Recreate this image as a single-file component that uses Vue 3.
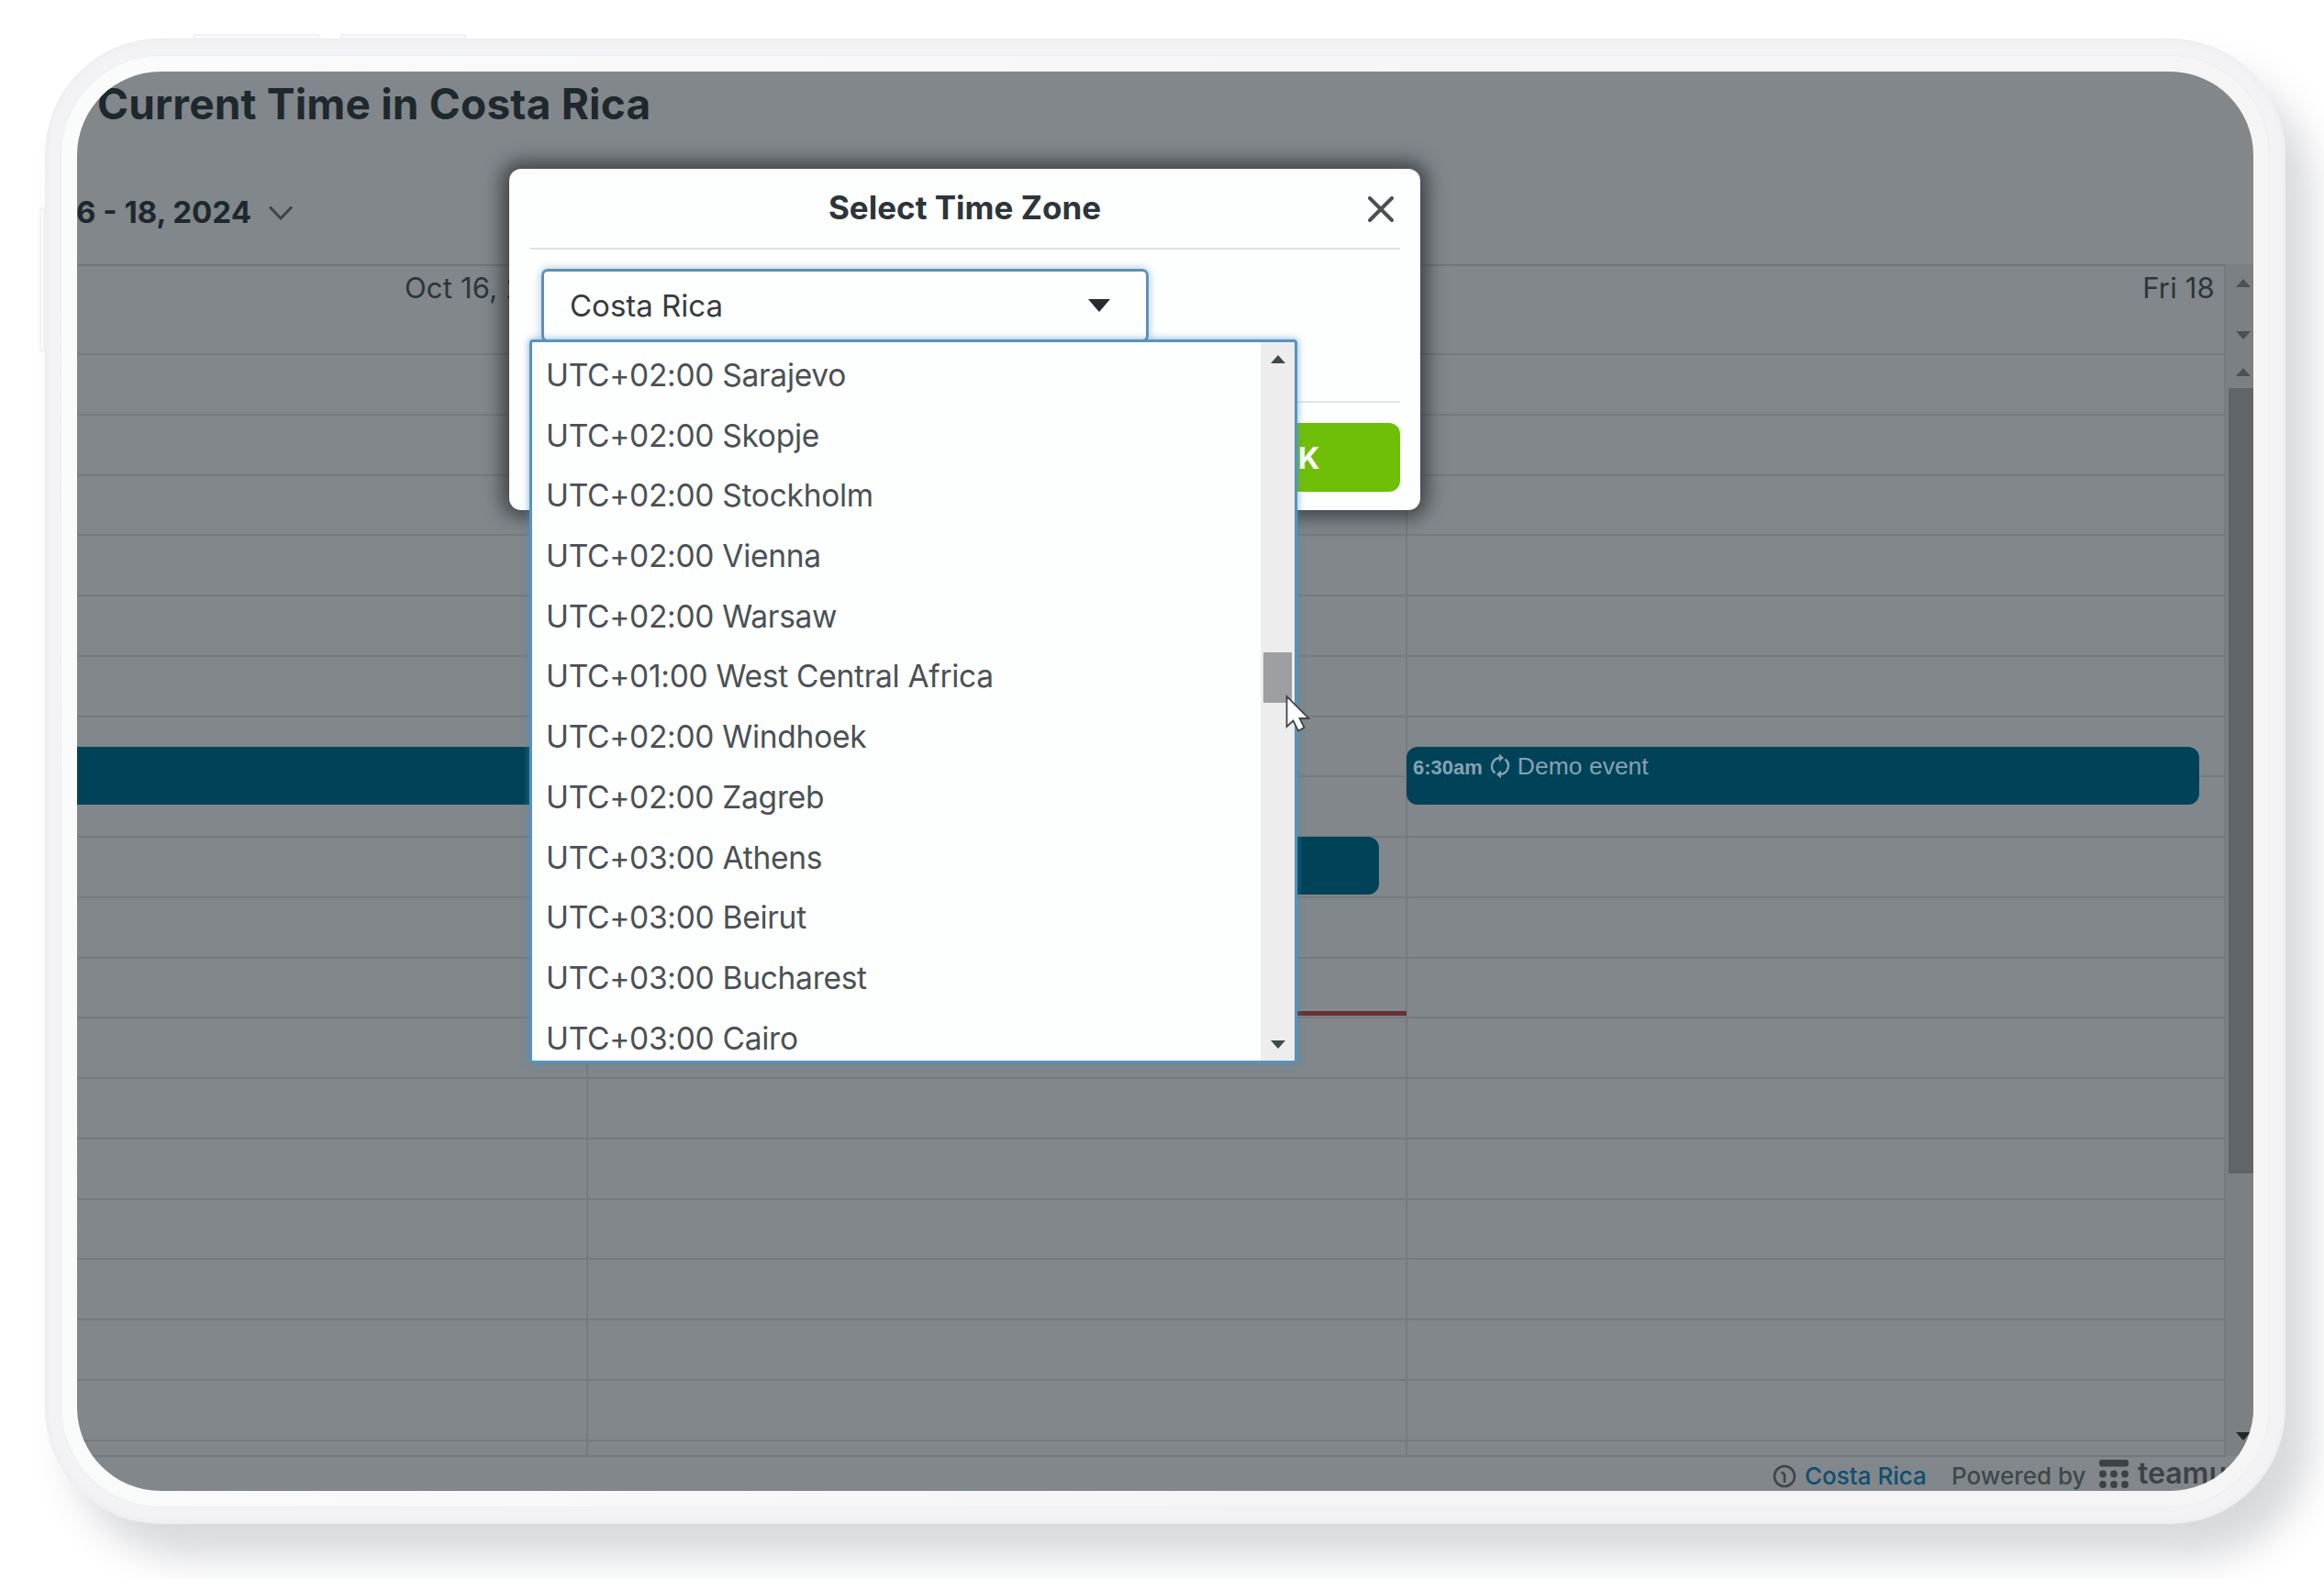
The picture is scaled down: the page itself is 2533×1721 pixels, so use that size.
<template>
  <div class="page">
    <div class="tablet">
      <!-- physical buttons -->
      <span class="tablet__key tablet__key--left"></span>
      <span class="tablet__key tablet__key--top1"></span>
      <span class="tablet__key tablet__key--top2"></span>

      <div class="tablet__bezel">
        <div class="screen">
          <header class="head">
            <h1 class="head__title">Current Time in Costa Rica</h1>
          </header>

          <div class="toolbar">
            <span class="toolbar__range">6 - 18, 2024</span>
            <svg class="toolbar__chevron" viewBox="0 0 28 18">
              <path d="M2 2.5 L14 15 L26 2.5" fill="none" stroke="#3f474b" stroke-width="3.2" />
            </svg>
          </div>

          <!-- calendar -->
          <div class="cal">
            <div class="cal__main">
              <div class="cal__days">
                <div v-for="d in days" :key="d" class="cal__day">{{ d }}</div>
              </div>
              <div class="cal__body">
                <div v-for="n in 18" :key="n" class="cal__row">
                  <div v-for="d in days" :key="d" class="cal__cell"></div>
                </div>
                <div class="cal__row cal__row--last">
                  <div v-for="d in days" :key="d" class="cal__cell"></div>
                </div>

                <div class="event event--wed"></div>
                <div class="event event--thu"></div>
                <div class="event event--fri">
                  <b class="event__time">6:30am</b>
                  <svg class="event__icon" viewBox="0 0 22 26">
                    <g fill="none" stroke="#86a2b3" stroke-width="2.4">
                      <path d="M5.500 20.500 A9.300 9.300 0 0 1 11 4" />
                      <path d="M16.500 5.500 A9.300 9.300 0 0 1 11 22" />
                    </g>
                    <path d="M10 -0.500 L15 4 L10 8.500 Z M12 17.500 L7 22 L12 26.500 Z" fill="#86a2b3" />
                  </svg>
                  <span class="event__name">Demo event</span>
                </div>
                <div class="now"></div>
              </div>
            </div>

            <div class="rail">
              <div class="rail__top">
                <i class="tri tri--up"></i>
                <i class="tri tri--down"></i>
              </div>
              <div class="rail__track">
                <i class="tri tri--up"></i>
                <div class="rail__thumb"></div>
                <i class="tri tri--down tri--dark"></i>
              </div>
            </div>
          </div>

          <footer class="foot">
            <svg class="foot__clock" viewBox="0 0 26 26" fill="none" stroke="#3f464a" stroke-width="2.6">
              <circle cx="13" cy="13" r="11" />
              <path d="M9.500 8.500 L13 11 V20" />
            </svg>
            <span class="foot__zone">Costa Rica</span>
            <span class="foot__by">Powered by</span>
            <svg class="foot__logo" viewBox="0 0 32 31" fill="#3b4347">
              <rect x="0" y="0" width="32" height="7.500" rx="3" />
              <circle v-for="c in dots" :key="c.id" :cx="c.x" :cy="c.y" r="3.900" />
            </svg>
            <span class="foot__brand">teamup</span>
          </footer>

          <!-- time zone dialog -->
          <section class="modal">
            <div class="modal__head">
              <h2 class="modal__title">Select Time Zone</h2>
              <svg class="modal__close" viewBox="0 0 28 28">
                <path d="M2 2 L26 26 M26 2 L2 26" stroke="#4a5054" stroke-width="4" stroke-linecap="round" />
              </svg>
            </div>
            <div class="modal__body">
              <div class="select">
                <span class="select__text">{{ selected }}</span>
                <i class="select__caret"></i>
              </div>
            </div>
            <div class="modal__foot">
              <button type="button" class="modal__ok">OK</button>
            </div>
          </section>

          <div class="drop">
            <ul class="drop__list">
              <li v-for="z in zones" :key="z" class="drop__item">{{ z }}</li>
            </ul>
            <div class="drop__bar">
              <i class="tri tri--up tri--list"></i>
              <div class="drop__thumb"></div>
              <i class="tri tri--down tri--list"></i>
            </div>
          </div>

          <svg class="cursor" viewBox="0 0 28 42">
            <path
              d="M1.500 2 V35 L8.500 28.500 L14 39.500 L20.500 36 L15.500 26 H25.500 Z"
              fill="#fff"
              stroke="#3f474c"
              stroke-width="1.800"
            />
          </svg>
        </div>
      </div>
    </div>
  </div>
</template>

<script setup>
import { ref } from 'vue'

const selected = ref('Costa Rica')

const days = ['Oct 16, 2024', 'Thu 17', 'Fri 18']

const zones = [
  'UTC+02:00 Sarajevo',
  'UTC+02:00 Skopje',
  'UTC+02:00 Stockholm',
  'UTC+02:00 Vienna',
  'UTC+02:00 Warsaw',
  'UTC+01:00 West Central Africa',
  'UTC+02:00 Windhoek',
  'UTC+02:00 Zagreb',
  'UTC+03:00 Athens',
  'UTC+03:00 Beirut',
  'UTC+03:00 Bucharest',
  'UTC+03:00 Cairo',
]

// 3 x 2 dots under the bar of the logo
const dots = Array.from({ length: 6 }, (_, i) => ({
  id: i,
  x: 4 + (i % 3) * 12,
  y: i < 3 ? 15.5 : 27,
}))
</script>

<style>
body {
  background: #fff;
}
</style>

<style scoped>
.page {
  box-sizing: border-box;
  width: 2533px;
  height: 1721px;
  padding: 42px 0 0 49px;
  overflow: hidden;
  background: #fff;
  font-family: Inter, 'Liberation Sans', sans-serif;
  color: #1e282d;
}

/* tablet */
.tablet {
  position: relative;
  box-sizing: border-box;
  width: 2442px;
  height: 1619px;
  padding: 19px 18px;
  border-radius: 126px;
  background: #f3f3f5;
  box-shadow: 28px 36px 42px rgba(70, 74, 88, .21), inset 0 0 8px #e9e9ec;
}
.tablet__bezel {
  box-sizing: border-box;
  height: 1581px;
  padding: 17px 17px 17px;
  border-radius: 108px;
  background: linear-gradient(100deg, #fafcfb, #f5f5f5 60%);
  box-shadow: 0 0 0 1px #ededef;
}
.tablet__key {
  position: absolute;
  box-sizing: border-box;
  background: #fcfcfc;
  border: 2px solid #f1f1f2;
}
.tablet__key--left {
  left: -6px;
  top: 184px;
  width: 6px;
  height: 158px;
  border-radius: 4px 0 0 4px;
}
.tablet__key--top1,
.tablet__key--top2 {
  top: -5px;
  width: 139px;
  height: 6px;
  border-radius: 4px 4px 0 0;
}
.tablet__key--top1 {
  left: 161px;
}
.tablet__key--top2 {
  left: 321px;
}

.screen {
  position: relative;
  display: flex;
  flex-direction: column;
  width: 2372px;
  height: 1547px;
  border-radius: 91px;
  overflow: hidden;
  background: #81878b;
}

/* header */
.head {
  height: 97px;
  padding-left: 22px;
}
.head__title {
  margin: 0;
  font-size: 46px;
  line-height: 71px;
  font-weight: 700;
  letter-spacing: .2px;
  white-space: nowrap;
}
.toolbar {
  display: flex;
  align-items: center;
  height: 113px;
}
.toolbar__range {
  margin-left: -1px;
  margin-top: -2px;
  font-size: 33px;
  font-weight: 700;
  white-space: nowrap;
}
.toolbar__chevron {
  width: 28px;
  height: 18px;
  margin: 1px 0 0 18px;
}

/* calendar */
.cal {
  display: flex;
  height: 1299px;
}
.cal__main {
  width: 2342px;
  flex: none;
}
.cal__days,
.cal__row {
  display: grid;
  grid-template-columns: 557px 893px 892px;
}
.cal__days {
  height: 99px;
  box-sizing: border-box;
  border-top: 2px solid #70777a;
  border-bottom: 2px solid #747b7e;
}
.cal__day {
  padding: 4px 12px 0 0;
  font-size: 31px;
  line-height: 40px;
  letter-spacing: .2px;
  text-align: right;
  color: #2c353a;
}
.cal__day:nth-child(3) {
  border-right: 2px solid #757b7f;
  padding-right: 10px;
}
.cal__body {
  position: relative;
}
.cal__row {
  box-sizing: border-box;
  height: 65.75px;
  border-bottom: 2px solid #747b7e;
}
.cal__cell {
  border-right: 2px solid #757b7f;
}
.cal__row--last {
  height: 17px;
}

.event {
  position: absolute;
  box-sizing: border-box;
  height: 63px;
  border-radius: 12px;
  background: #004358;
}
.event--wed {
  left: -300px;
  top: 427px;
  width: 822px;
}
.event--thu {
  left: 557px;
  top: 525px;
  width: 862px;
}
.event--fri {
  display: flex;
  align-items: flex-start;
  left: 1449px;
  top: 427px;
  width: 864px;
  padding: 5px 7px;
  font-family: 'Liberation Sans', sans-serif;
  color: #86a2b3;
}
.event__time {
  font-size: 22px;
  line-height: 36px;
}
.event__icon {
  width: 22px;
  height: 26px;
  margin: 3px 8px 0;
  overflow: visible;
}
.event__name {
  font-size: 26.5px;
  line-height: 33px;
}
.now {
  position: absolute;
  left: 557px;
  top: 715px;
  width: 892px;
  height: 5px;
  background: #6a2f36;
}

/* page scrollbars */
.rail {
  flex: 1;
  display: flex;
  flex-direction: column;
  overflow: hidden;
  background: #7a8083;
}
.rail__top {
  display: flex;
  flex-direction: column;
  justify-content: space-between;
  height: 82px;
  padding: 16px 0 0 11px;
  box-sizing: border-box;
}
.rail__track {
  flex: 1;
  display: flex;
  flex-direction: column;
  padding: 31px 0 17px 11px;
}
.rail__thumb {
  height: 856px;
  margin: 13px 0 auto -8px;
  background: #5f6568;
}
.tri {
  flex: none;
  width: 0;
  height: 0;
  border-left: 8px solid transparent;
  border-right: 8px solid transparent;
}
.tri--up {
  border-bottom: 9px solid #4b5256;
}
.tri--down {
  border-top: 9px solid #4b5256;
}
.tri--dark {
  border-top-color: #1f282d;
}

/* footer */
.foot {
  flex: 1;
  display: flex;
  align-items: center;
  white-space: nowrap;
  font-size: 26px;
  font-weight: 500;
  padding-left: 1848px;
}
.foot__clock {
  flex: none;
  width: 26px;
  height: 26px;
  margin: 6px 9px 0 0;
}
.foot__zone {
  width: 134px;
  margin: 5px 26px 0 0;
  color: #114f6d;
}
.foot__by {
  width: 148px;
  margin: 5px 13px 0 0;
  color: #3f474b;
}
.foot__logo {
  flex: none;
  width: 32px;
  height: 31px;
}
.foot__brand {
  margin: -1px 0 0 10px;
  font-size: 32px;
  font-weight: 600;
  color: #3b4347;
}

/* dialog */
.modal {
  position: absolute;
  left: 471px;
  top: 106px;
  box-sizing: border-box;
  width: 993px;
  height: 372px;
  padding: 0 22px;
  border-radius: 13px;
  background: #fdfefe;
  box-shadow: 0 0 20px 8px rgba(20, 24, 26, .6);
}
.modal__head {
  display: grid;
  grid-template-columns: 1fr auto 1fr;
  align-items: center;
  height: 86px;
  border-bottom: 2px solid #dfe1e2;
}
.modal__title {
  grid-column: 2;
  margin: -3px 0 0;
  font-size: 35px;
  font-weight: 700;
  color: #2c353a;
}
.modal__close {
  justify-self: end;
  width: 28px;
  height: 28px;
  margin: 2px 7px 0 0;
}
.modal__body {
  height: 167px;
  padding: 21px 0 0 13px;
  box-sizing: border-box;
  border-bottom: 2px solid #e3e5e6;
}
.select {
  display: flex;
  align-items: center;
  justify-content: space-between;
  box-sizing: border-box;
  width: 662px;
  height: 80px;
  padding: 0 39px 0 28px;
  border: 3px solid #6090b2;
  border-radius: 7px;
  box-shadow: 0 0 8px 1px #b3cde2;
  color: #343c40;
}
.select__text {
  font-size: 33px;
}
.select__caret {
  border-left: 12px solid transparent;
  border-right: 12px solid transparent;
  border-top: 14px solid #252d31;
}
.modal__foot {
  display: flex;
  justify-content: flex-end;
  padding-top: 22px;
}
.modal__ok {
  width: 224px;
  height: 75px;
  border: none;
  border-radius: 12px;
  background: #6fbf09;
  color: #fff;
  font-family: inherit;
  font-size: 33px;
  font-weight: 700;
}

/* zone list */
.drop {
  position: absolute;
  left: 493px;
  top: 292px;
  display: flex;
  justify-content: space-between;
  box-sizing: border-box;
  width: 837px;
  height: 789px;
  border: 3px solid #5794bb;
  border-radius: 4px;
  background: #fdfefe;
  box-shadow: 0 0 7px 1px rgba(70, 135, 185, .55);
  overflow: hidden;
}
.drop__list {
  margin: 0;
  padding: 3px 0 0 15px;
  list-style: none;
}
.drop__item {
  height: 65.7px;
  line-height: 66px;
  font-size: 33.5px;
  letter-spacing: -.28px;
  color: #4a5155;
  white-space: nowrap;
}
.drop__bar {
  display: flex;
  flex-direction: column;
  align-items: center;
  box-sizing: border-box;
  width: 37px;
  padding: 14px 0 13px;
  background: #ededee;
}
.drop__thumb {
  width: 31px;
  height: 55px;
  margin: 315px 0 auto;
  background: #9d9fa0;
}
.tri--list.tri--up {
  border-bottom-color: #42494d;
}
.tri--list.tri--down {
  border-top-color: #42494d;
}

.cursor {
  position: absolute;
  left: 1317px;
  top: 679px;
  width: 28px;
  height: 42px;
}
</style>
